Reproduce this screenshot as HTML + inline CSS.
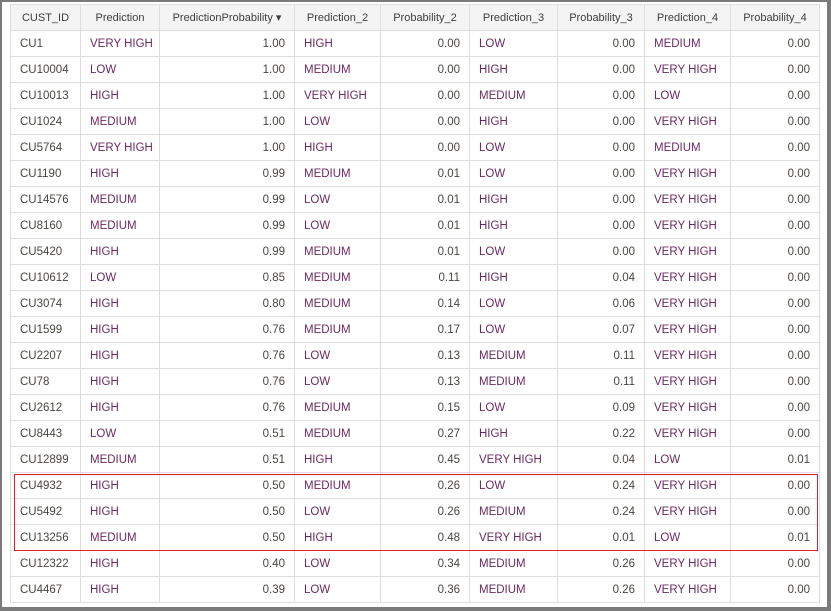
<!DOCTYPE html>
<html><head><style>
html,body{margin:0;padding:0;}
body{width:831px;height:611px;background:#7a7a7a;position:relative;overflow:hidden;font-family:"Liberation Sans",sans-serif;}
.frame{position:absolute;left:2px;top:2px;width:825px;height:605px;background:#fff;}
table{position:absolute;left:10px;top:4px;border-collapse:collapse;table-layout:fixed;width:809px;font-size:11.5px;color:#4a4540;}
td,th{border:1px solid #dedede;height:26px;padding:0 9px;white-space:nowrap;overflow:hidden;box-sizing:border-box;}
th{background:#f4f4f4;font-weight:normal;text-align:center;color:#3e3e3e;padding:0 4px;font-size:11px;}
td.n{text-align:right;}
td.p{color:#6a2a60;}
.red{position:absolute;left:14px;top:474px;width:802px;height:75px;border:1px solid #e02030;}
</style></head><body>
<div class="frame"></div>
<table>
<colgroup><col style="width:70px"><col style="width:79px"><col style="width:135px"><col style="width:86px"><col style="width:89px"><col style="width:88px"><col style="width:87px"><col style="width:86px"><col style="width:89px"></colgroup>
<tr><th>CUST_ID</th><th>Prediction</th><th>PredictionProbability ▾</th><th>Prediction_2</th><th>Probability_2</th><th>Prediction_3</th><th>Probability_3</th><th>Prediction_4</th><th>Probability_4</th></tr>
<tr><td>CU1</td><td class="p">VERY HIGH</td><td class="n">1.00</td><td class="p">HIGH</td><td class="n">0.00</td><td class="p">LOW</td><td class="n">0.00</td><td class="p">MEDIUM</td><td class="n">0.00</td></tr>
<tr><td>CU10004</td><td class="p">LOW</td><td class="n">1.00</td><td class="p">MEDIUM</td><td class="n">0.00</td><td class="p">HIGH</td><td class="n">0.00</td><td class="p">VERY HIGH</td><td class="n">0.00</td></tr>
<tr><td>CU10013</td><td class="p">HIGH</td><td class="n">1.00</td><td class="p">VERY HIGH</td><td class="n">0.00</td><td class="p">MEDIUM</td><td class="n">0.00</td><td class="p">LOW</td><td class="n">0.00</td></tr>
<tr><td>CU1024</td><td class="p">MEDIUM</td><td class="n">1.00</td><td class="p">LOW</td><td class="n">0.00</td><td class="p">HIGH</td><td class="n">0.00</td><td class="p">VERY HIGH</td><td class="n">0.00</td></tr>
<tr><td>CU5764</td><td class="p">VERY HIGH</td><td class="n">1.00</td><td class="p">HIGH</td><td class="n">0.00</td><td class="p">LOW</td><td class="n">0.00</td><td class="p">MEDIUM</td><td class="n">0.00</td></tr>
<tr><td>CU1190</td><td class="p">HIGH</td><td class="n">0.99</td><td class="p">MEDIUM</td><td class="n">0.01</td><td class="p">LOW</td><td class="n">0.00</td><td class="p">VERY HIGH</td><td class="n">0.00</td></tr>
<tr><td>CU14576</td><td class="p">MEDIUM</td><td class="n">0.99</td><td class="p">LOW</td><td class="n">0.01</td><td class="p">HIGH</td><td class="n">0.00</td><td class="p">VERY HIGH</td><td class="n">0.00</td></tr>
<tr><td>CU8160</td><td class="p">MEDIUM</td><td class="n">0.99</td><td class="p">LOW</td><td class="n">0.01</td><td class="p">HIGH</td><td class="n">0.00</td><td class="p">VERY HIGH</td><td class="n">0.00</td></tr>
<tr><td>CU5420</td><td class="p">HIGH</td><td class="n">0.99</td><td class="p">MEDIUM</td><td class="n">0.01</td><td class="p">LOW</td><td class="n">0.00</td><td class="p">VERY HIGH</td><td class="n">0.00</td></tr>
<tr><td>CU10612</td><td class="p">LOW</td><td class="n">0.85</td><td class="p">MEDIUM</td><td class="n">0.11</td><td class="p">HIGH</td><td class="n">0.04</td><td class="p">VERY HIGH</td><td class="n">0.00</td></tr>
<tr><td>CU3074</td><td class="p">HIGH</td><td class="n">0.80</td><td class="p">MEDIUM</td><td class="n">0.14</td><td class="p">LOW</td><td class="n">0.06</td><td class="p">VERY HIGH</td><td class="n">0.00</td></tr>
<tr><td>CU1599</td><td class="p">HIGH</td><td class="n">0.76</td><td class="p">MEDIUM</td><td class="n">0.17</td><td class="p">LOW</td><td class="n">0.07</td><td class="p">VERY HIGH</td><td class="n">0.00</td></tr>
<tr><td>CU2207</td><td class="p">HIGH</td><td class="n">0.76</td><td class="p">LOW</td><td class="n">0.13</td><td class="p">MEDIUM</td><td class="n">0.11</td><td class="p">VERY HIGH</td><td class="n">0.00</td></tr>
<tr><td>CU78</td><td class="p">HIGH</td><td class="n">0.76</td><td class="p">LOW</td><td class="n">0.13</td><td class="p">MEDIUM</td><td class="n">0.11</td><td class="p">VERY HIGH</td><td class="n">0.00</td></tr>
<tr><td>CU2612</td><td class="p">HIGH</td><td class="n">0.76</td><td class="p">MEDIUM</td><td class="n">0.15</td><td class="p">LOW</td><td class="n">0.09</td><td class="p">VERY HIGH</td><td class="n">0.00</td></tr>
<tr><td>CU8443</td><td class="p">LOW</td><td class="n">0.51</td><td class="p">MEDIUM</td><td class="n">0.27</td><td class="p">HIGH</td><td class="n">0.22</td><td class="p">VERY HIGH</td><td class="n">0.00</td></tr>
<tr><td>CU12899</td><td class="p">MEDIUM</td><td class="n">0.51</td><td class="p">HIGH</td><td class="n">0.45</td><td class="p">VERY HIGH</td><td class="n">0.04</td><td class="p">LOW</td><td class="n">0.01</td></tr>
<tr><td>CU4932</td><td class="p">HIGH</td><td class="n">0.50</td><td class="p">MEDIUM</td><td class="n">0.26</td><td class="p">LOW</td><td class="n">0.24</td><td class="p">VERY HIGH</td><td class="n">0.00</td></tr>
<tr><td>CU5492</td><td class="p">HIGH</td><td class="n">0.50</td><td class="p">LOW</td><td class="n">0.26</td><td class="p">MEDIUM</td><td class="n">0.24</td><td class="p">VERY HIGH</td><td class="n">0.00</td></tr>
<tr><td>CU13256</td><td class="p">MEDIUM</td><td class="n">0.50</td><td class="p">HIGH</td><td class="n">0.48</td><td class="p">VERY HIGH</td><td class="n">0.01</td><td class="p">LOW</td><td class="n">0.01</td></tr>
<tr><td>CU12322</td><td class="p">HIGH</td><td class="n">0.40</td><td class="p">LOW</td><td class="n">0.34</td><td class="p">MEDIUM</td><td class="n">0.26</td><td class="p">VERY HIGH</td><td class="n">0.00</td></tr>
<tr><td>CU4467</td><td class="p">HIGH</td><td class="n">0.39</td><td class="p">LOW</td><td class="n">0.36</td><td class="p">MEDIUM</td><td class="n">0.26</td><td class="p">VERY HIGH</td><td class="n">0.00</td></tr>
</table>
<div class="red"></div>
</body></html>
